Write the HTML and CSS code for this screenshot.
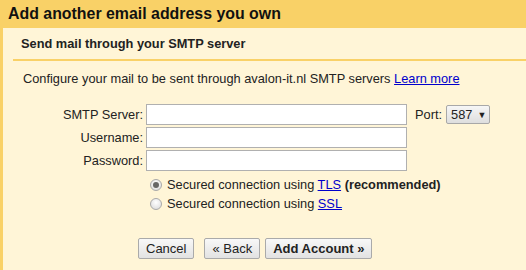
FILE: index.html
```html
<!DOCTYPE html>
<html>
<head>
<meta charset="utf-8">
<link rel="stylesheet" href="styles.css">
</head>
<body>
<div class="dialog">
  <div class="title">Add another email address you own</div>
  <div class="panel">
    <div class="subhead">Send mail through your SMTP server</div>
    <div class="content">
      <p class="intro">Configure your mail to be sent through avalon-it.nl SMTP servers <a href="#">Learn more</a></p>
      <div class="form">
        <label class="lbl">SMTP Server:</label>
        <div class="field"><input class="text" type="text"></div>
        <div class="port"><span>Port:</span><span class="select">587 <span class="arrow">&#9660;</span></span></div>
        <label class="lbl">Username:</label>
        <div class="field"><input class="text" type="text"></div>
        <div></div>
        <label class="lbl">Password:</label>
        <div class="field"><input class="text" type="password"></div>
        <div></div>
      </div>
      <div class="radios">
        <div class="radio-row"><span class="radio checked"></span><span>Secured connection using <a href="#">TLS</a> <b>(recommended)</b></span></div>
        <div class="radio-row"><span class="radio"></span><span>Secured connection using <a href="#">SSL</a></span></div>
      </div>
      <div class="buttons">
        <button class="btn">Cancel</button>
        <button class="btn back">&laquo; Back</button>
        <button class="btn primary">Add Account &raquo;</button>
      </div>
    </div>
  </div>
</div>
</body>
</html>
```
FILE: styles.css
```css
html, body {
  margin: 0;
  padding: 0;
  background: #fff5d7;
  font-family: "Liberation Sans", Arial, sans-serif;
  color: #222;
  font-size: 12.8px;
}
.dialog {
  width: 526px;
  height: 270px;
  overflow: hidden;
  display: flex;
  flex-direction: column;
}
.title {
  height: 28px;
  line-height: 28px;
  background: #f9d167;
  font-size: 15.9px;
  font-weight: bold;
  padding-left: 8px;
  color: #111;
  flex: none;
}
.panel {
  flex: 1;
  border-left: 3px solid #f9d167;
  background: #fff5d7;
}
.subhead {
  margin-left: 10px;
  padding: 8px 0 0 8px;
  height: 23px;
  border-bottom: 2px solid #f9d167;
  font-weight: bold;
  font-size: 12.8px;
  line-height: 15px;
}
.content {
  padding-left: 20px;
}
.intro {
  margin: 10px 0 0 0;
  line-height: 16px;
}
a {
  color: #00c;
}
.form {
  margin-top: 17px;
  display: grid;
  grid-template-columns: 120px 262px auto;
  row-gap: 2px;
  column-gap: 3px;
  align-items: center;
}
.lbl {
  text-align: right;
}
.text {
  box-sizing: border-box;
  width: 261px;
  height: 21px;
  margin: 0;
  border: 1px solid #b0b0b0;
  background: #fff;
  display: block;
}
.port {
  display: flex;
  align-items: center;
  gap: 4px;
  margin-left: 4px;
}
.select {
  display: inline-flex;
  align-items: center;
  gap: 5px;
  box-sizing: border-box;
  height: 19px;
  padding: 0 3px 0 4px;
  border: 1px solid #a8a8a8;
  border-radius: 2px;
  background: linear-gradient(#f6f6f6, #dedede);
  font-size: 12.8px;
}
.arrow {
  font-size: 9px;
}
.radios {
  margin-top: 5px;
  margin-left: 127px;
  display: flex;
  flex-direction: column;
  gap: 2px;
}
.radio-row {
  display: flex;
  align-items: center;
  gap: 5px;
  height: 17px;
}
.radio {
  box-sizing: border-box;
  width: 12px;
  height: 12px;
  border-radius: 50%;
  border: 1px solid #a9a9a9;
  background: radial-gradient(circle at 50% 35%, #fff, #d8d8d8);
  position: relative;
}
.radio.checked::after {
  content: "";
  position: absolute;
  left: 2px;
  top: 2px;
  width: 6px;
  height: 6px;
  border-radius: 50%;
  background: #666;
}
.buttons {
  margin-top: 26px;
  margin-left: 115px;
  display: flex;
  gap: 10px;
}
.btn {
  box-sizing: border-box;
  height: 21px;
  padding: 0 7px;
  border: 1px solid #aaa;
  border-radius: 2px;
  background: linear-gradient(#f8f8f8, #e2e2e2);
  font-family: "Liberation Sans", Arial, sans-serif;
  font-size: 13px;
  color: #222;
}
.btn.primary {
  font-weight: bold;
  margin-left: -5px;
}
```
